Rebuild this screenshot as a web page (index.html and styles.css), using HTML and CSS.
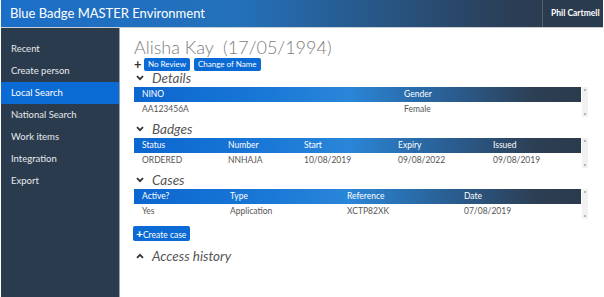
FILE: index.html
```html
<!DOCTYPE html>
<html lang="en">
<head>
  <meta charset="UTF-8">
  <meta name="viewport" content="width=device-width, initial-scale=1.0">
  <title>Blue Badge MASTER Environment</title>
  <link rel="stylesheet" href="styles.css">
</head>
<body>

<header class="topbar">
  <div class="brand">Blue Badge MASTER Environment</div>
  <div class="user">Phil Cartmell</div>
</header>

<div class="layout">
  <nav class="sidebar">
    <a class="nav-item">Recent</a>
    <a class="nav-item">Create person</a>
    <a class="nav-item active">Local Search</a>
    <a class="nav-item">National Search</a>
    <a class="nav-item">Work items</a>
    <a class="nav-item">Integration</a>
    <a class="nav-item">Export</a>
  </nav>

  <main class="content">
    <h1 class="person-name">Alisha Kay&nbsp; (17/05/1994)</h1>
    <div class="tag-row">
      <span class="plus">+</span>
      <button class="tag">No Review</button>
      <button class="tag">Change of Name</button>
    </div>

    <!-- Details -->
    <div class="section-title">
      <svg class="chevron" width="8" height="6" viewBox="0 0 8 6"><path d="M1 1.2 L4 4.2 L7 1.2" fill="none" stroke="#333" stroke-width="1.8"/></svg>
      <span>Details</span>
    </div>
    <div class="grid-wrap">
      <div class="grid details">
        <div class="grid-head">
          <div>NINO</div><div>Gender</div>
        </div>
        <div class="grid-row">
          <div>AA123456A</div><div>Female</div>
        </div>
      </div>
      <div class="scroll"><span class="up"></span><span class="down"></span></div>
    </div>

    <!-- Badges -->
    <div class="section-title">
      <svg class="chevron" width="8" height="6" viewBox="0 0 8 6"><path d="M1 1.2 L4 4.2 L7 1.2" fill="none" stroke="#333" stroke-width="1.8"/></svg>
      <span>Badges</span>
    </div>
    <div class="grid-wrap">
      <div class="grid badges">
        <div class="grid-head">
          <div>Status</div><div>Number</div><div>Start</div><div>Expiry</div><div>Issued</div>
        </div>
        <div class="grid-row">
          <div>ORDERED</div><div>NNHAJA</div><div>10/08/2019</div><div>09/08/2022</div><div>09/08/2019</div>
        </div>
      </div>
      <div class="scroll"><span class="up"></span><span class="down"></span></div>
    </div>

    <!-- Cases -->
    <div class="section-title">
      <svg class="chevron" width="8" height="6" viewBox="0 0 8 6"><path d="M1 1.2 L4 4.2 L7 1.2" fill="none" stroke="#333" stroke-width="1.8"/></svg>
      <span>Cases</span>
    </div>
    <div class="grid-wrap">
      <div class="grid cases">
        <div class="grid-head">
          <div>Active?</div><div>Type</div><div>Reference</div><div>Date</div>
        </div>
        <div class="grid-row">
          <div>Yes</div><div>Application</div><div>XCTP82XK</div><div>07/08/2019</div>
        </div>
      </div>
      <div class="scroll"><span class="up"></span><span class="down"></span></div>
    </div>

    <button class="create-btn"><b>+</b>Create case</button>

    <div class="section-title history">
      <svg class="chevron" width="8" height="6" viewBox="0 0 8 6"><path d="M1 4.8 L4 1.8 L7 4.8" fill="none" stroke="#333" stroke-width="1.8"/></svg>
      <span>Access history</span>
    </div>
  </main>
</div>

</body>
</html>
```

FILE: styles.css
```css
/* Page base */
* {
  box-sizing: border-box;
}

body {
  margin: 0;
  padding: 0 1px;
  font-family: Lato, "Open Sans", Arial, sans-serif;
  background-color: #fff;
  height: 100vh;
  overflow: hidden;
}

/* Top bar */
.topbar {
  display: flex;
  height: 28px;
  background: linear-gradient(to right, #1c6fc8 0%, #2470b9 40%, #2b3d54 85%, #2b3b4e 100%);
  border-bottom: 1px solid #c9ced4;
  color: #fff;
}

.brand {
  flex: 1;
  padding-left: 9px;
  font-size: 13px;
  line-height: 27px;
}

.user {
  width: 61px;
  border-left: 1px solid #56606d;
  background-color: #2b3b4e;
  font-size: 8.5px;
  font-weight: bold;
  line-height: 27px;
  padding-left: 8px;
  white-space: nowrap;
}

/* Layout */
.layout {
  display: flex;
  height: calc(100vh - 28px);
}

.sidebar {
  width: 121px;
  background-color: #2b3b4e;
  border-right: 1px solid #9aa3ad;
  padding-top: 10px;
  display: flex;
  flex-direction: column;
}

.nav-item {
  display: block;
  height: 22px;
  line-height: 22px;
  padding-left: 10px;
  font-size: 9.5px;
  color: #e6e9ed;
}

.nav-item.active {
  background-color: #0b6bd5;
  color: #fff;
}

.content {
  flex: 1;
  padding: 10px 15px 0 14px;
}

.person-name {
  margin: 0 0 1px;
  font-size: 18px;
  font-weight: 300;
  line-height: 18px;
  color: #7d7d7d;
}

/* Tags under the name */
.tag-row {
  display: flex;
  align-items: center;
  gap: 4px;
  height: 14px;
}

.plus {
  font-size: 13px;
  font-weight: bold;
  color: #333;
  width: 6px;
  line-height: 12px;
}

.tag {
  font-family: inherit;
  height: 13px;
  padding: 0 4px;
  border: none;
  border-radius: 2px;
  background-color: #0b6ad3;
  color: #fff;
  font-size: 8px;
  line-height: 13px;
}

/* Section headings */
.section-title {
  display: flex;
  align-items: center;
  gap: 8px;
  height: 14px;
  margin: 0 0 2px 2px;
  font-size: 13.5px;
  font-style: italic;
  color: #555;
}

.section-title + .grid-wrap {
  margin-bottom: 5px;
}

.grid-wrap + .section-title {
  margin-top: 5px;
}

.history {
  margin-top: 8px;
}

/* Grids */
.grid-wrap {
  display: flex;
  width: 454px;
}

.grid {
  width: 448px;
}

.grid-head,
.grid-row {
  display: grid;
  font-size: 8.5px;
}

.grid-head {
  height: 15px;
  line-height: 15px;
  color: #fff;
  background: linear-gradient(to right, #0b66d0 0%, #1a78d6 30%, #2a86d8 48%, #2a5f94 70%, #2c3e52 90%, #2b3b4e 100%);
}

.grid-row {
  height: 15px;
  line-height: 15px;
  color: #555;
}

.grid-head div,
.grid-row div {
  padding-left: 8px;
}

.details .grid-head,
.details .grid-row {
  grid-template-columns: 262px 1fr;
}

.badges .grid-head,
.badges .grid-row {
  grid-template-columns: 86px 76px 94px 95px 1fr;
}

.cases .grid-head,
.cases .grid-row {
  grid-template-columns: 88px 117px 117px 1fr;
}

/* Fake scrollbar beside each grid */
.scroll {
  width: 6px;
  margin-left: 1px;
  background-color: #f1f1f1;
  display: flex;
  flex-direction: column;
  justify-content: space-between;
  align-items: center;
  padding: 2px 0;
}

.scroll span {
  display: block;
  width: 2px;
  height: 2px;
  background-color: #b5b5b5;
}

/* Create case button */
.create-btn {
  display: block;
  margin: 7px 0 0 -1px;
  height: 15px;
  padding: 0 4px 0 3px;
  border: none;
  border-radius: 2px;
  background-color: #0b6ad3;
  color: #fff;
  font-family: inherit;
  font-size: 8.5px;
  line-height: 15px;
}

.create-btn b {
  font-size: 12px;
  margin-right: 0;
}
```
